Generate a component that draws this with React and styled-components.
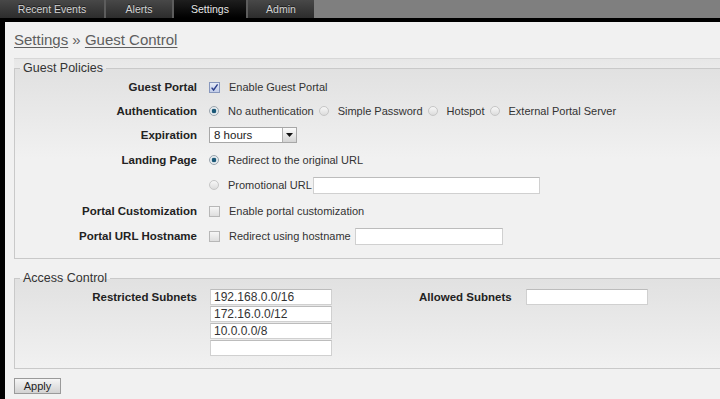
import React from "react";
import styled, { createGlobalStyle } from "styled-components";

const GlobalStyle = createGlobalStyle`
  html, body { margin: 0; padding: 0; background: #f1f1f1; overflow: hidden; }
  body { font-family: "Liberation Sans", Arial, sans-serif; font-size: 11px; color: #333; }
  * { box-sizing: border-box; }
`;

const Page = styled.div`
  width: 720px;
  height: 399px;
  display: flex;
  flex-direction: column;
  overflow: hidden;
`;

const TabBar = styled.div`
  height: 22px;
  flex: none;
  background: #7f7f7f;
  border-bottom: 4px solid #000;
  display: flex;
`;

const Tabs = styled.div`
  display: flex;
  gap: 2px;
  background: #5d5d5d;
`;

const Tab = styled.div`
  width: ${(p) => p.$w}px;
  height: 18px;
  display: flex;
  align-items: center;
  justify-content: center;
  font-size: 10.5px;
  color: ${(p) => (p.$active ? "#e6e6e6" : "#d4d4d4")};
  text-shadow: 0 -1px 0 rgba(0, 0, 0, 0.6);
  background: ${(p) =>
    p.$active
      ? "linear-gradient(#1e1e1e, #000)"
      : "linear-gradient(#484848, #2c2c2c)"};
`;

const Main = styled.div`
  flex: 1;
  border-left: 5px solid #000;
  padding-left: 9px;
  background: #f1f1f1;
  overflow: hidden;
`;

const Breadcrumb = styled.div`
  height: 36px;
  padding-top: 9px;
  font-size: 15px;
  line-height: 18px;
  color: #5e5e5e;
`;

const Crumb = styled.span`
  text-decoration: underline;
  text-underline-offset: 2px;
  text-decoration-thickness: 1px;
`;

const Panel = styled.div`
  width: 730px;
  border-top: 1px solid #d7d7d7;
  padding-top: 2px;
  background: linear-gradient(#e7e7e7, #f1f1f1 30px);
`;

const Fieldset = styled.fieldset`
  margin: 0 0 ${(p) => p.$mb || 0}px 0;
  padding: 0 0 ${(p) => p.$pb}px 0;
  border: 1px solid #c9c9c9;
  min-inline-size: 0;
  background: linear-gradient(#e1e1e1, #f1f1f1 90px);
`;

const Legend = styled.legend`
  margin-left: 5px;
  padding: 0 3px;
  font-size: 12.5px;
  line-height: 14px;
  color: #333;
`;

const Row = styled.div`
  display: grid;
  grid-template-columns: 182px auto;
  column-gap: 12px;
  align-items: center;
  height: ${(p) => p.$h}px;
`;

const Label = styled.div`
  text-align: right;
  font-weight: bold;
  font-size: 11.5px;
  color: #222;
  white-space: nowrap;
`;

const Control = styled.div`
  display: flex;
  align-items: center;
  white-space: nowrap;
  color: #333;
`;

const Option = styled.span`
  display: inline-flex;
  align-items: center;
  margin-right: ${(p) => p.$mr ?? 0}px;
`;

const BoxMark = styled.span`
  flex: none;
  width: 11px;
  height: 11px;
  margin-right: 9px;
  border: 1px solid ${(p) => (p.$checked ? "#8797bd" : "#b7b7b7")};
  background: ${(p) =>
    p.$checked
      ? "linear-gradient(#e4eaf7, #c2cde8)"
      : "linear-gradient(#f6f6f6, #dedede)"};
  display: inline-flex;
  align-items: center;
  justify-content: center;
`;

const RadioMark = styled.span`
  flex: none;
  width: 10px;
  height: 10px;
  margin-right: 9px;
  border-radius: 50%;
  border: 1px solid ${(p) => (p.$on ? "#9aa4ad" : "#c6c6c6")};
  background: ${(p) =>
    p.$on
      ? "radial-gradient(circle, #1b5877 0, #1b5877 2px, #dde5ea 2.6px, #f3f5f6 5px)"
      : "linear-gradient(#f7f7f7, #dcdcdc)"};
`;

const Select = styled.div`
  width: 88px;
  height: 16px;
  border: 1px solid #a7a7a7;
  background: #fff;
  display: flex;
  align-items: center;
  justify-content: space-between;
  padding-left: 4px;
  font-size: 11.5px;
  color: #222;
`;

const SelectArrow = styled.span`
  width: 14px;
  height: 14px;
  border-left: 1px solid #b0b0b0;
  background: linear-gradient(#fbfbfb, #d4d4d4);
  display: flex;
  align-items: center;
  justify-content: center;
`;

const TextInput = styled.input`
  width: ${(p) => p.$w}px;
  height: ${(p) => p.$h || 17}px;
  margin: 0 0 0 ${(p) => p.$ml || 0}px;
  padding: 0 0 0 3px;
  border: 1px solid #d0d0d0;
  border-top-color: #bcbcbc;
  background: #fff;
  font-family: "Liberation Sans", Arial, sans-serif;
  font-size: 12px;
  color: #333;
  outline: none;
`;

const AccessRow = styled.div`
  display: flex;
  align-items: flex-start;
  padding-top: 4px;
`;

const AccessLabel = styled(Label)`
  width: ${(p) => p.$w}px;
  margin-left: ${(p) => p.$ml || 0}px;
  margin-right: ${(p) => p.$mr || 0}px;
  text-align: ${(p) => p.$align || "right"};
  line-height: 16px;
`;

const InputStack = styled.div`
  display: flex;
  flex-direction: column;
  gap: 1px;
`;

const ApplyButton = styled.button`
  margin-top: 9px;
  width: 47px;
  height: 16px;
  padding: 0;
  border: 1px solid #9a9a9a;
  background: linear-gradient(#f5f5f5, #d2d2d2);
  font-family: "Liberation Sans", Arial, sans-serif;
  font-size: 11px;
  color: #222;
  display: flex;
  align-items: center;
  justify-content: center;
`;

const Check = () => (
  <svg width="9" height="9" viewBox="0 0 9 9">
    <path d="M1.6 4.6 L3.6 7 L7.6 1.4" fill="none" stroke="#2c3f8c" strokeWidth="1.4" />
  </svg>
);

const Arrow = () => (
  <svg width="7" height="4" viewBox="0 0 7 4">
    <path d="M0 0 H7 L3.5 4 Z" fill="#111" />
  </svg>
);

const Checkbox = ({ checked, children }) => (
  <Option>
    <BoxMark $checked={checked}>{checked && <Check />}</BoxMark>
    {children}
  </Option>
);

const Radio = ({ on, children, mr }) => (
  <Option $mr={mr}>
    <RadioMark $on={on} />
    {children}
  </Option>
);

export default function App() {
  return (
    <Page>
      <GlobalStyle />
      <TabBar>
        <Tabs>
          <Tab $w={104}>Recent Events</Tab>
          <Tab $w={66}>Alerts</Tab>
          <Tab $w={72} $active>Settings</Tab>
          <Tab $w={66}>Admin</Tab>
        </Tabs>
      </TabBar>
      <Main>
        <Breadcrumb>
          <Crumb>Settings</Crumb> » <Crumb>Guest Control</Crumb>
        </Breadcrumb>
        <Panel>
          <Fieldset $pb={10} $mb={12}>
            <Legend>Guest Policies</Legend>
            <Row $h={24}>
              <Label>Guest Portal</Label>
              <Control>
                <Checkbox checked>Enable Guest Portal</Checkbox>
              </Control>
            </Row>
            <Row $h={24}>
              <Label>Authentication</Label>
              <Control>
                <Radio on mr={5}>No authentication</Radio>
                <Radio mr={5}>Simple Password</Radio>
                <Radio mr={5}>Hotspot</Radio>
                <Radio>External Portal Server</Radio>
              </Control>
            </Row>
            <Row $h={24}>
              <Label>Expiration</Label>
              <Control>
                <Select>
                  8 hours
                  <SelectArrow>
                    <Arrow />
                  </SelectArrow>
                </Select>
              </Control>
            </Row>
            <Row $h={25}>
              <Label>Landing Page</Label>
              <Control>
                <Radio on>Redirect to the original URL</Radio>
              </Control>
            </Row>
            <Row $h={26}>
              <Label />
              <Control>
                <Radio>Promotional URL</Radio>
                <TextInput $w={227} $ml={1} readOnly />
              </Control>
            </Row>
            <Row $h={26}>
              <Label>Portal Customization</Label>
              <Control>
                <Checkbox>Enable portal customization</Checkbox>
              </Control>
            </Row>
            <Row $h={24}>
              <Label>Portal URL Hostname</Label>
              <Control>
                <Checkbox>Redirect using hostname</Checkbox>
                <TextInput $w={148} $ml={4} readOnly />
              </Control>
            </Row>
          </Fieldset>
          <Fieldset $pb={12}>
            <Legend>Access Control</Legend>
            <AccessRow>
              <AccessLabel $w={182} $mr={13}>Restricted Subnets</AccessLabel>
              <InputStack>
                <TextInput $w={122} $h={16} defaultValue="192.168.0.0/16" readOnly />
                <TextInput $w={122} $h={16} defaultValue="172.16.0.0/12" readOnly />
                <TextInput $w={122} $h={16} defaultValue="10.0.0.0/8" readOnly />
                <TextInput $w={122} $h={16} readOnly />
              </InputStack>
              <AccessLabel $w={94} $ml={87} $mr={13} $align="left">Allowed Subnets</AccessLabel>
              <TextInput $w={122} $h={16} readOnly />
            </AccessRow>
          </Fieldset>
        </Panel>
        <ApplyButton>Apply</ApplyButton>
      </Main>
    </Page>
  );
}
